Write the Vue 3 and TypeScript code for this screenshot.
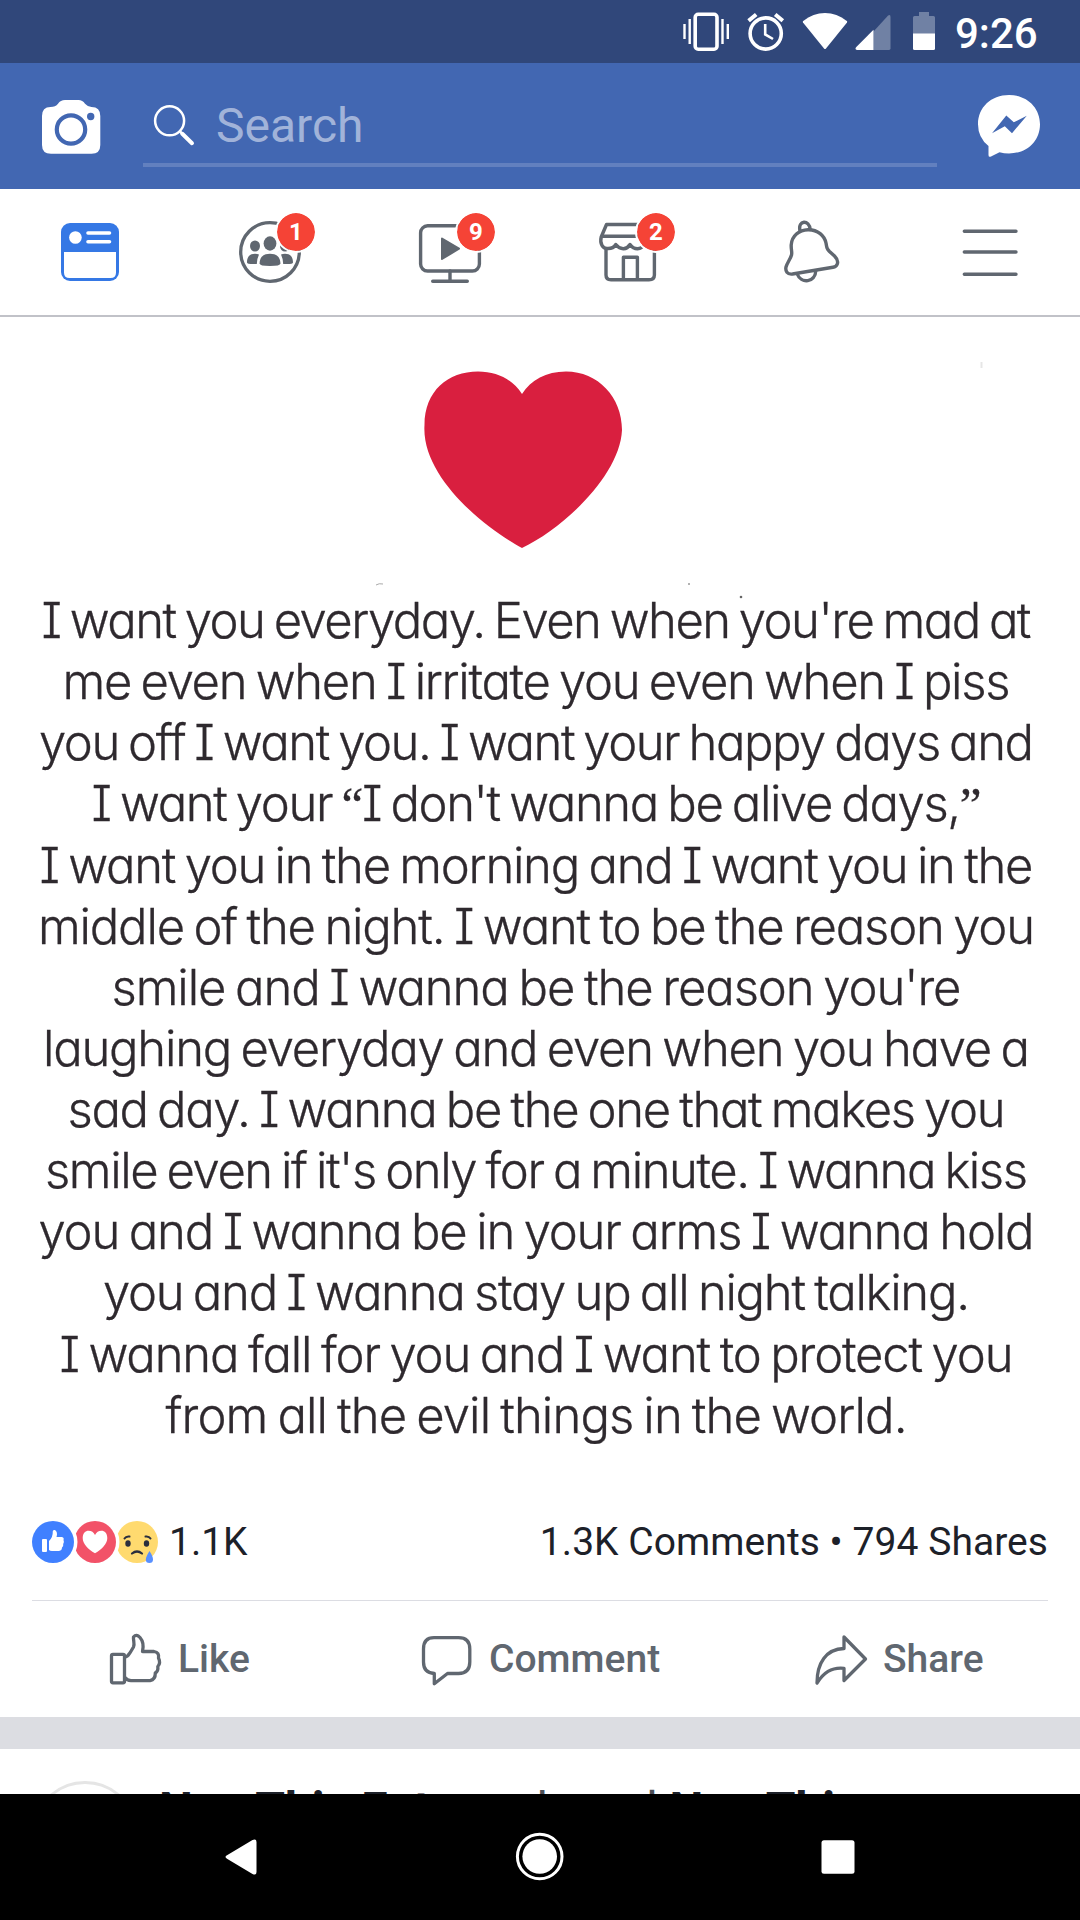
<script setup lang="ts">
import { onMounted, ref } from 'vue'

interface QuoteLine {
  text: string
  width: number
}

const lines: QuoteLine[] = [
  { text: 'I want you everyday. Even when you\'re mad at', width: 990 },
  { text: 'me even when I irritate you even when I piss', width: 948 },
  { text: 'you off I want you. I want your happy days and', width: 995 },
  { text: 'I want your “I don\'t wanna be alive days,”', width: 890 },
  { text: 'I want you in the morning and I want you in the', width: 994 },
  { text: 'middle of the night. I want to be the reason you', width: 997 },
  { text: 'smile and I wanna be the reason you\'re', width: 850 },
  { text: 'laughing everyday and even when you have a', width: 987 },
  { text: 'sad day. I wanna be the one that makes you', width: 938 },
  { text: 'smile even if it\'s only for a minute. I wanna kiss', width: 983 },
  { text: 'you and I wanna be in your arms I wanna hold', width: 996 },
  { text: 'you and I wanna stay up all night talking.', width: 867 },
  { text: 'I wanna fall for you and I want to protect you', width: 954 },
  { text: 'from all the evil things in the world.', width: 742 },
]

// Curly quotes are set in a serif face, so they become segments of their own.
const segments = (text: string): string[] => text.split(/([“”])/).filter((s) => s.length > 0)
const isQuote = (s: string): boolean => s === '“' || s === '”'

const spans = ref<HTMLElement[]>([])
const spacing = ref<number[]>(lines.map(() => 0))

// Spread every line of the quote to its typeset width.
onMounted(() => {
  spacing.value = lines.map((line, i) => {
    const natural = spans.value[i].getBoundingClientRect().width
    return (line.width - natural) / (line.text.length - 1)
  })
})
</script>

<template>
  <div class="screen">
    <div class="status">
      <svg class="s-vibrate" width="50" height="44" viewBox="682 10 50 44" fill="none" stroke="#fff">
        <rect x="695.2" y="14.3" width="21.8" height="34.9" rx="3" stroke-width="3.6" />
        <path d="M684.5 24v15M689.7 19v25M722.5 19v25M727.8 24v15" stroke-width="2.4" />
      </svg>
      <svg class="s-alarm" width="40" height="44" viewBox="746 10 40 44" fill="none" stroke="#fff">
        <circle cx="765.7" cy="33.5" r="15.6" stroke-width="3.6" />
        <path d="M748.6 20.8l7.6-6.3M782.8 20.8l-7.6-6.3" stroke-width="4" />
        <path d="M765.2 24v10.4l7.8 4.6" stroke-width="2.6" />
      </svg>
      <svg class="s-wifi" width="46" height="44" viewBox="802 10 46 44" fill="#fff">
        <path d="M803 22.6C802.6 22 802.7 21.5 803.2 21.1C810 15.8 817 13 825 13S840 15.8 846.8 21.1C847.3 21.5 847.4 22 847 22.6L826 48.4Q825 49.4 824 48.4Z" />
      </svg>
      <svg class="s-signal" width="36" height="44" viewBox="854.5 10 36 44">
        <path d="M873 31.5L887.6 15.6Q890 14 890 17V48.6Q890 50 888.6 50H873Z" fill="#7081a4" />
        <path d="M873 29.7V50H856.5Q854 49.5 855.6 47.3Z" fill="#fff" />
      </svg>
      <svg class="s-battery" width="22" height="44" viewBox="913 10 22 44">
        <path d="M913 34V17.5Q913 16 914.5 16H919V12H929V16H933.5Q935 16 935 17.5V34Z" fill="#7081a4" />
        <path d="M913 33.5H935V48.5Q935 50 933.5 50H914.5Q913 50 913 48.5Z" fill="#fff" />
      </svg>
      <span class="clock">9:26</span>
    </div>

    <header class="header">
      <svg class="camera" width="60" height="58" viewBox="41 98 60 58">
        <path fill="#fff" d="M50.5 107Q55.5 107 58 103.7Q60.500 100 65 100H78.500Q82.500 100 85 103.700Q88 107 91.500 107Q100.300 107 100.300 116V145Q100.300 153.800 91.500 153.800H51Q42 153.800 42 145V116Q42 107 50.500 107Z" />
        <circle cx="71" cy="129.500" r="14.200" fill="none" stroke="#4267b2" stroke-width="4.200" />
        <circle cx="90.700" cy="116.500" r="3.700" fill="#4267b2" />
      </svg>
      <div class="search">
        <svg width="44" height="44" viewBox="152 104 44 44" fill="none" stroke="#fff">
          <circle cx="169.600" cy="121.800" r="14.500" stroke-width="2.500" />
          <path d="M180 132.500l2.500 2.500" stroke-width="2.500" />
          <path d="M182.300 134.800L192 144.200" stroke-width="4" stroke-linecap="round" />
        </svg>
        <span>Search</span>
      </div>
      <svg class="messenger" width="64" height="66" viewBox="977 93 64 66">
        <path fill="#fff" d="M1009 95C1027 95 1040 107.500 1040 124.200S1027 153.500 1009 153.500Q1004 153.500 999.500 152.300L991 156.600Q988.500 157.500 988.500 155V146Q978 137.500 978 124.200C978 107.500 991 95 1009 95Z" />
        <path fill="#4267b2" d="M992 133.200L1006.300 115.400L1013.800 122.300L1026.800 115.700L1012 133.200L1004.800 126.200Z" />
      </svg>
    </header>

    <nav class="tabs">
      <div class="tab">
        <svg width="180" height="126" viewBox="0 189 180 126">
          <rect x="61" y="223" width="58" height="58" rx="9" fill="#3578e5" />
          <path d="M64 252H116V272.500Q116 278 110.500 278H69.500Q64 278 64 272.500Z" fill="#fff" />
          <circle cx="75.400" cy="237.500" r="6.300" fill="#fff" />
          <path d="M88 233H109.500M88 241.800H109.500" stroke="#fff" stroke-width="3.600" stroke-linecap="round" />
        </svg>
      </div>
      <div class="tab">
        <svg width="180" height="126" viewBox="180 189 180 126" fill="#606770">
          <circle cx="270" cy="252" r="29.300" fill="none" stroke="#606770" stroke-width="3.300" />
          <ellipse cx="270" cy="243.500" rx="6.400" ry="7.200" />
          <path d="M259.600 263.500C259.600 257.500 263 253.800 270 253.800S280.400 257.500 280.400 263.500Q280.400 266 270 266T259.600 263.500Z" />
          <ellipse cx="255" cy="246" rx="5" ry="5.600" />
          <path d="M247 262.500C247 257 249.500 253.800 255 253.800Q257.300 253.800 259 254.500Q257 258.500 256.800 264Q247 264.500 247 262.500Z" />
          <ellipse cx="285" cy="246" rx="5" ry="5.600" />
          <path d="M293 262.500C293 257 290.500 253.800 285 253.800Q282.700 253.800 281 254.500Q283 258.500 283.200 264Q293 264.500 293 262.500Z" />
        </svg>
        <span class="badge">1</span>
      </div>
      <div class="tab">
        <svg width="180" height="126" viewBox="360 189 180 126" fill="none" stroke="#606770" stroke-width="3.400" stroke-linecap="round">
          <rect x="420.600" y="225.800" width="58.800" height="45.200" rx="7" />
          <path d="M450 271V281M432.700 281.300H467.300" />
          <path d="M442 238.500L459 248.700L442 259Z" fill="#606770" stroke-width="2" stroke-linejoin="round" />
        </svg>
        <span class="badge">9</span>
      </div>
      <div class="tab">
        <svg width="180" height="126" viewBox="540 189 180 126" fill="none" stroke="#606770" stroke-width="3.400" stroke-linejoin="round">
          <path d="M656 224.500H606.500L601.200 237C599.500 244 603 248.500 607 248.500Q613 249 615.800 244.500Q619.500 249 623.500 248.800Q627.500 248.500 630 244.500Q633 248.800 637.500 248.800Q642 248.500 644 244.500" />
          <path d="M602 236.300H656M606 248V275Q606 279.800 611 279.800H649Q654.400 279.800 654.400 275V246M623.400 279V257.200H637.400V279" />
        </svg>
        <span class="badge">2</span>
      </div>
      <div class="tab">
        <svg width="180" height="126" viewBox="720 189 180 126" fill="none" stroke="#606770" stroke-width="3.400" stroke-linejoin="round">
          <path d="M791.500 255C792.300 252 791 250 791.200 245C791.800 236 799 230 808 229.700C818 229.500 824.500 236 826 243C826.800 248 827 249 829.500 251.500L834.500 256C837.500 259 838 262 837.300 264Q836.300 266.800 833 267.300L792.500 274C787 274.700 785.200 271 786 267C787 263 790.700 258.500 791.500 255Z" />
          <path d="M800 231C797.500 219.500 809.500 219.500 810.200 229.500M797 273.500C801 284.500 815.500 282.500 815.800 270.500" />
        </svg>
      </div>
      <div class="tab">
        <svg width="180" height="126" viewBox="900 189 180 126" fill="none" stroke="#606770" stroke-width="3.400" stroke-linecap="round">
          <path d="M964.300 231.300H1016M964.300 252H1016M964.300 274.300H1016" />
        </svg>
      </div>
    </nav>

    <main class="photo">
      <svg class="heart" width="1080" height="272" viewBox="0 317 1080 272">
        <path fill="#d91f3f" d="M522 548C488 530 421 478 424.500 425C424.500 391 448 371.500 478 371.500C498 371.500 513 380 522 394C531 380 546 371.500 566 371.500C598 371.500 622 397 622 430C620 475 564 528 522 548Z" />
        <path d="M376 585Q379 583 383 584" stroke="#aaa" stroke-width="1" fill="none" />
        <circle cx="689" cy="584" r="1" fill="#999" />
        <circle cx="741" cy="597" r="1.300" fill="#666" />
        <path d="M981.500 362v6" stroke="#e6e6e6" stroke-width="2" />
      </svg>
      <p v-for="(line, i) in lines" :key="i" class="line">
        <span ref="spans" :style="{ letterSpacing: spacing[i] + 'px', marginRight: -spacing[i] + 'px' }"><span v-for="(part, j) in segments(line.text)" :key="j" :class="{ curly: isQuote(part) }">{{ part }}</span></span>
      </p>
    </main>

    <section class="counts">
      <svg width="130" height="46" viewBox="30 1519 130 46">
        <circle cx="137" cy="1542" r="21" fill="#ffda6f" />
        <path d="M124.500 1538.500Q126 1536 129.500 1536.500M150.500 1538.500Q149 1536 145.500 1536.500" stroke="#2a2e3d" stroke-width="2" fill="none" stroke-linecap="round" />
        <ellipse cx="128" cy="1543.500" rx="2.700" ry="3.200" fill="#2a2e3d" />
        <ellipse cx="146.500" cy="1543.500" rx="2.700" ry="3.200" fill="#2a2e3d" />
        <path d="M132 1553.500Q137 1549.500 142 1553.500" stroke="#2a2e3d" stroke-width="2.200" fill="none" stroke-linecap="round" />
        <path d="M149.500 1551Q153 1556.500 153 1559.500A3.600 3.600 0 0 1 145.800 1559.500Q146 1556.500 149.500 1551Z" fill="#5890ff" />
        <circle cx="95" cy="1542" r="24.500" fill="#fff" />
        <circle cx="95" cy="1542" r="21" fill="#f25268" />
        <path d="M95 1553.300C88 1549 82.700 1544 82.700 1538C82.700 1533 85.500 1530.700 88.500 1530.700Q93 1530.700 95 1535Q97 1530.700 101.500 1530.700C104.500 1530.700 107.300 1533 107.300 1538C107.300 1544 102 1549 95 1553.300Z" fill="#fff" />
        <circle cx="53" cy="1542" r="24.500" fill="#fff" />
        <circle cx="53" cy="1542" r="21" fill="#4080ff" />
        <path d="M43 1539H46Q47 1539 47 1540V1551Q47 1552 46 1552H43Q42 1552 42 1551V1540Q42 1539 43 1539ZM49 1541Q53 1537.500 52.800 1531Q53.500 1529.500 55 1530Q58 1532 56.500 1537H62Q64.300 1537.500 63.500 1540Q64.500 1542 63.200 1544Q63.700 1546 62 1547.500Q62 1550.500 59 1551H52Q50 1551 49 1550Z" fill="#fff" />
      </svg>
      <span class="total">1.1K</span>
      <span class="stats">1.3K Comments • 794 Shares</span>
    </section>

    <section class="actions">
      <div class="action like">
        <svg width="54" height="54" viewBox="109 1633 54 54" fill="none" stroke="#606770" stroke-width="3.300" stroke-linejoin="round">
          <rect x="111.500" y="1654.300" width="13" height="28.500" rx="1.500" />
          <path d="M125 1657C128 1657 129 1654 130.500 1652L133.500 1647C135 1644 133 1639.500 133.500 1637Q136.500 1633.500 140 1637.500C143.500 1641.500 144 1645 142.500 1651.500H154Q159.500 1652.500 158.500 1658Q161 1663 157.800 1666.500Q158.500 1671 155.300 1673Q155.500 1679.500 150 1680.700H131Q127 1680.500 125 1677.500" />
        </svg>
        <span>Like</span>
      </div>
      <div class="action comment">
        <svg width="54" height="54" viewBox="420 1633 54 54" fill="none" stroke="#606770" stroke-width="3.300" stroke-linejoin="round">
          <path d="M434 1637.700H458.500Q469.800 1637.700 469.800 1649V1662Q469.800 1673.500 458.500 1673.500H447.500L434.300 1683.700V1673.500Q423.500 1673 423.500 1662V1649Q423.500 1637.700 434 1637.700Z" />
        </svg>
        <span>Comment</span>
      </div>
      <div class="action share">
        <svg width="54" height="54" viewBox="814 1633 54 54" fill="none" stroke="#606770" stroke-width="3.300" stroke-linejoin="round">
          <path d="M844 1637L865.500 1659L844 1680.500V1668.300C831 1667 823.500 1673 817 1683C817 1663 826 1649 844 1648.500Z" />
        </svg>
        <span>Share</span>
      </div>
    </section>

    <div class="gap"></div>

    <section class="next">
      <div class="avatar"></div>
      <p class="title"><b>NowThis Future</b> shared <b>NowThis</b></p>
    </section>

    <footer class="sysnav">
      <svg width="1080" height="126" viewBox="0 1794 1080 126" fill="#fff">
        <path d="M227 1855.300L252.500 1840Q256.500 1838.500 256.500 1842V1872Q256.500 1875.800 252.500 1874L227 1858.700Q224 1857 227 1855.300Z" />
        <circle cx="539.700" cy="1856.500" r="22.300" fill="none" stroke="#fff" stroke-width="3" />
        <circle cx="539.700" cy="1856.500" r="17.300" />
        <rect x="821.500" y="1840.300" width="33" height="33.400" rx="2.500" />
      </svg>
    </footer>
  </div>
</template>

<style>
html,
body {
  margin: 0;
  background: #fff;
}
</style>

<style scoped>
.screen {
  width: 1080px;
  height: 1920px;
  display: flex;
  flex-direction: column;
  overflow: hidden;
  background: #fff;
  font-family: Roboto, sans-serif;
}
svg {
  display: block;
  flex: none;
}
.status {
  height: 63px;
  flex: none;
  display: flex;
  align-items: flex-start;
  box-sizing: border-box;
  padding: 10px 0 0 682px;
  background: #30477a;
}
.s-alarm {
  margin-left: 14px;
}
.s-wifi {
  margin-left: 16px;
}
.s-signal {
  margin-left: 6.5px;
}
.s-battery {
  margin-left: 22.5px;
}
.clock {
  margin-left: 20px;
  color: #fff;
  font-size: 42px;
  font-weight: 500;
  line-height: 48px;
}
.header {
  height: 126px;
  flex: none;
  display: flex;
  align-items: flex-start;
  background: #4267b2;
}
.camera {
  margin: 35px 42px 0 41px;
}
.search {
  width: 794px;
  height: 104px;
  box-sizing: border-box;
  border-bottom: 4px solid #6280bf;
  display: flex;
  align-items: center;
  padding: 24px 0 0 9px;
}
.search span {
  margin: 2px 0 0 20px;
  color: #a1b3d9;
  font-size: 48px;
  line-height: 56px;
}
.messenger {
  margin: 30px 0 0 40px;
}
.tabs {
  height: 126px;
  flex: none;
  display: flex;
  border-bottom: 2px solid #c1c2c8;
}
.tab {
  position: relative;
  width: 180px;
}
.badge {
  position: absolute;
  left: 95px;
  top: 22px;
  width: 38px;
  height: 38px;
  border: 2.5px solid #fff;
  border-radius: 50%;
  background: #f54336;
  background-clip: padding-box;
  color: #fff;
  font-size: 24px;
  font-weight: 700;
  line-height: 38px;
  text-align: center;
}
.photo {
  height: 1184px;
  flex: none;
}
.heart {
  position: relative;
  overflow: visible;
}
.line {
  width: 1073px;
  height: 61.13px;
  margin: 0;
  color: #2e292e;
  font-family: Inter, sans-serif;
  font-size: 49px;
  font-weight: 300;
  line-height: 64.6px;
  font-feature-settings: 'cv11', 'cv08', 'calt' 0;
  text-align: center;
  white-space: nowrap;
  word-spacing: -3px;
  -webkit-text-stroke: 0.3px #2e292e;
}
.curly {
  font-family: 'Liberation Serif', serif;
  line-height: 1;
}
.counts {
  height: 100px;
  flex: none;
  box-sizing: border-box;
  margin: 0 32px;
  border-bottom: 1px solid #dcdde3;
  display: flex;
  align-items: flex-start;
  padding-top: 18px;
  color: #1d2129;
  font-size: 39px;
  line-height: 46px;
}
.counts svg {
  margin-left: -2px;
}
.total {
  margin-left: 9px;
}
.stats {
  margin-left: auto;
  letter-spacing: 0.05px;
}
.actions {
  height: 116px;
  flex: none;
  display: flex;
  align-items: flex-start;
  color: #606770;
  font-size: 39px;
  font-weight: 500;
}
.action {
  display: flex;
  align-items: center;
  gap: 15px;
  margin-top: 32px;
}
.action span {
  line-height: 46px;
  margin-top: -2px;
}
.like {
  width: 311px;
  padding-left: 109px;
  box-sizing: border-box;
}
.comment {
  width: 394px;
  margin-left: 109px;
}
.gap {
  height: 32px;
  flex: none;
  background: #dcdde2;
}
.next {
  height: 45px;
  flex: none;
  overflow: hidden;
  display: flex;
  align-items: flex-start;
}
.avatar {
  flex: none;
  width: 100px;
  height: 100px;
  margin: 32px 0 0 32px;
  border: 3px solid #e5e5e5;
  border-radius: 50%;
}
.title {
  margin: 33px 0 0 21px;
  color: #4b4f56;
  font-size: 48px;
  line-height: 56px;
  white-space: nowrap;
}
.title b {
  color: #1d2129;
}
.sysnav {
  height: 126px;
  flex: none;
  background: #000;
}
</style>
